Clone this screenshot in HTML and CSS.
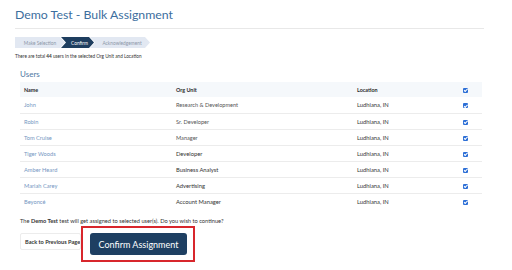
FILE: index.html
```html
<!DOCTYPE html>
<html lang="en">

<head>
  <meta charset="UTF-8">
  <meta name="viewport" content="width=device-width, initial-scale=1.0">
  <title>Demo Test - Bulk Assignment</title>

  <link rel="stylesheet" href="styles.css">
</head>

<body>
  <div class="page">
    <div class="header">
      <h1>Demo Test - Bulk Assignment</h1>
    </div>

    <div class="steps">
      <span class="step first">Make Selection</span>
      <span class="step active">Confirm</span>
      <span class="step last">Acknowledgement</span>
    </div>

    <p class="summary">There are total <b>44</b> users in the selected Org Unit and Location</p>

    <div class="users">
      <h2>Users</h2>
      <table>
        <colgroup>
          <col class="c-name">
          <col class="c-org">
          <col class="c-loc">
          <col class="c-chk">
        </colgroup>
        <thead>
          <tr>
            <th>Name</th>
            <th>Org Unit</th>
            <th>Location</th>
            <th><span class="tick"></span></th>
          </tr>
        </thead>
        <tbody>
          <tr>
            <td><a href="#">John</a></td>
            <td class="grey">Research &amp; Development</td>
            <td>Ludhiana, IN</td>
            <td><span class="tick"></span></td>
          </tr>
          <tr>
            <td><a href="#">Robin</a></td>
            <td class="grey">Sr. Developer</td>
            <td>Ludhiana, IN</td>
            <td><span class="tick"></span></td>
          </tr>
          <tr>
            <td><a href="#">Tom Cruise</a></td>
            <td class="grey">Manager</td>
            <td>Ludhiana, IN</td>
            <td><span class="tick"></span></td>
          </tr>
          <tr>
            <td><a href="#">Tiger Woods</a></td>
            <td>Developer</td>
            <td>Ludhiana, IN</td>
            <td><span class="tick"></span></td>
          </tr>
          <tr>
            <td><a href="#">Amber Heard</a></td>
            <td>Business Analyst</td>
            <td>Ludhiana, IN</td>
            <td><span class="tick"></span></td>
          </tr>
          <tr>
            <td><a href="#">Mariah Carey</a></td>
            <td>Advertising</td>
            <td>Ludhiana, IN</td>
            <td><span class="tick"></span></td>
          </tr>
          <tr>
            <td><a href="#">Beyoncé</a></td>
            <td>Account Manager</td>
            <td>Ludhiana, IN</td>
            <td><span class="tick"></span></td>
          </tr>
        </tbody>
      </table>

      <p class="note">The <b>Demo Test</b> test will get assigned to selected user(s). Do you wish to continue?</p>

      <div class="actions">
        <button class="btn-back">Back to Previous Page</button>
        <div class="highlight">
          <button class="btn-confirm">Confirm Assignment</button>
        </div>
      </div>
    </div>
  </div>
</body>

</html>
```

FILE: styles.css
```css
* {
  padding: 0;
  margin: 0;
  box-sizing: border-box;
}

body {
  background-color: white;
  font-family: Lato, 'Open Sans', sans-serif;
  color: #333;
}

.page {
  width: 484px;
  padding-left: 15px;
}

.header {
  padding-top: 5px;
  height: 29px;
  border-bottom: 1px solid #e8e8e8;
}

.header h1 {
  font-size: 12.3px;
  font-weight: 400;
  line-height: 20px;
  color: #3c6e9e;
}

.steps {
  display: flex;
  margin-top: 8px;
  height: 11px;
}

.step {
  display: flex;
  align-items: center;
  justify-content: center;
  height: 11px;
  width: 60px;
  padding-left: 4px;
  margin-right: -4px;
  font-size: 4.8px;
  color: #8c97a8;
  background-color: #e2e8f2;
  clip-path: polygon(0 0, calc(100% - 5px) 0, 100% 50%, calc(100% - 5px) 100%, 0 100%, 5px 50%);
}

.step.first {
  width: 50px;
  padding-left: 0;
  clip-path: polygon(0 0, calc(100% - 5px) 0, 100% 50%, calc(100% - 5px) 100%, 0 100%);
}

.step.active {
  width: 33px;
  background-color: #1e3e5f;
  color: white;
}

.summary {
  margin-top: 3px;
  font-size: 4.7px;
  line-height: 10px;
  color: #333;
}

.users {
  padding-left: 5px;
}

.users h2 {
  margin-top: 8px;
  font-size: 8px;
  font-weight: 400;
  line-height: 11px;
  color: #4f79a3;
}

table {
  width: 462px;
  margin-top: 2px;
  border-collapse: collapse;
  table-layout: fixed;
}

.c-name { width: 152px; }
.c-org { width: 181px; }
.c-loc { width: 102px; }
.c-chk { width: 27px; }

th {
  height: 15px;
  background-color: #f5f8fb;
  font-size: 5.4px;
  font-weight: 700;
  color: #2b2b2b;
  text-align: left;
  padding: 0 4px;
}

td {
  height: 16px;
  border-top: 1px solid #ececec;
  font-size: 5.8px;
  color: #333;
  padding: 0 4px;
}

tbody tr:first-child td {
  border-top: none;
}

td a {
  color: #7496c2;
  text-decoration: none;
  font-size: 5.7px;
}

td.grey {
  color: #555;
  font-size: 5.6px;
}

th:last-child,
td:last-child {
  padding-left: 8px;
}

.tick {
  display: inline-block;
  position: relative;
  width: 5px;
  height: 5px;
  border-radius: 1px;
  background-color: #2d6fd6;
  vertical-align: middle;
}

.tick::after {
  content: '';
  position: absolute;
  left: 1.5px;
  top: 0.5px;
  width: 1.2px;
  height: 2.5px;
  border: solid white;
  border-width: 0 0.8px 0.8px 0;
  transform: rotate(45deg);
}

.note {
  margin-top: 8px;
  font-size: 5.7px;
  line-height: 8px;
  color: #333;
}

.actions {
  display: flex;
  align-items: flex-start;
  margin-top: 1px;
}

.btn-back {
  width: 61px;
  height: 17px;
  margin-top: 7px;
  padding-left: 4px;
  text-align: left;
  white-space: nowrap;
  overflow: hidden;
  background-color: white;
  border: 1px solid #ececec;
  border-radius: 2px;
  font-family: Lato, sans-serif;
  font-size: 5.6px;
  font-weight: 700;
  color: #333;
}

.highlight {
  padding: 5px 6px 5px 7px;
  border: 2px solid #d8262c;
}

.btn-confirm {
  display: block;
  width: 97px;
  height: 22px;
  background-color: #1e3f62;
  border: none;
  border-radius: 3px;
  font-family: Lato, sans-serif;
  font-size: 9px;
  color: white;
}
```
